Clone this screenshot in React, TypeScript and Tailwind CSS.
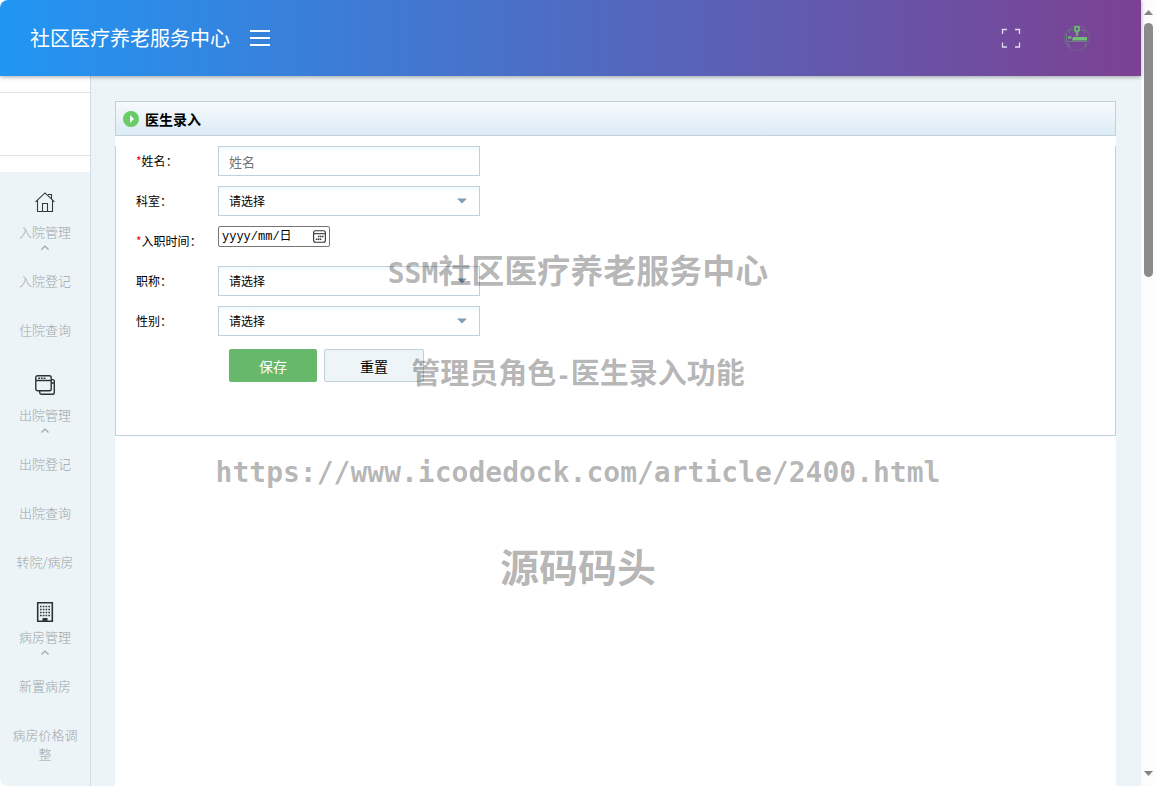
import type { ReactNode } from "react"

const HomeIcon = () => (
  <svg width="20" height="20" viewBox="0 0 20 20" fill="none" stroke="#333a3f" strokeWidth="1.1">
    <path d="M.5 9.8 10 .9l9.5 8.9M2.5 8.2v11.3h15V8.2M7.5 19.5v-8h5v8M13 2.5h3.5v4.3" />
  </svg>
)

const WindowsIcon = () => (
  <svg width="20" height="20" viewBox="0 0 20 20" fill="none" stroke="#2c3236" strokeWidth="1.4">
    <rect x=".8" y=".8" width="15.4" height="15" rx="1.8" />
    <path d="M1 5.5h15M16.2 4.6h1.4a1.7 1.7 0 0 1 1.7 1.7v11.2a1.8 1.8 0 0 1-1.8 1.8H6.4a1.7 1.7 0 0 1-1.7-1.7v-1.6M16 8h3" />
    <path d="M3.2 3.2h7.2" strokeWidth="1.6" strokeDasharray="1.8 .9" />
  </svg>
)

const BuildingIcon = () => (
  <svg width="20" height="20" viewBox="0 0 20 20" fill="none" stroke="#2c3236">
    <path d="M2.7.7h14.6v18.6H2.7z" strokeWidth="1.6" />
    <path d="M5 4.5h10M5 7.5h10M5 10.5h10M5 13.5h10" strokeWidth="1.6" strokeDasharray="1.6 1.2" />
    <path d="M7.5 16h5v3.5h-5z" fill="#2c3236" stroke="none" />
  </svg>
)

const FullscreenIcon = () => (
  <svg width="20" height="20" viewBox="0 0 20 20" fill="none" stroke="#e3daf0" strokeWidth="1.3">
    <path d="M1.5 6V1.5H6M14 1.5h4.5V6M18.5 14.5V19H14M6 19H1.5v-4.5" />
  </svg>
)

const AvatarIcon = () => (
  <svg width="26" height="26" viewBox="0 0 26 26" fill="none">
    <circle cx="13" cy="13" r="12.4" stroke="#75618c" />
    <path d="M5 7.5V5h4M17 5h3.5v2.5M2.5 9v8M2.500 16.500h21M3.500 18l2 4M22.500 18l-2 4" stroke="#6c7f80" />
    <path d="M10 1h6v5l-1.800 1.500V11h-2.400V7.500L10 6Z" fill="#68ae6e" />
    <path d="M12 3h2v2h-2z" fill="#75479a" />
    <path d="M4 11.500h3.500v2H4zM9 12h14v3.500H8z" fill="#73bd75" />
  </svg>
)

const groups: { title: string; icon: ReactNode; compact?: boolean; items: string[] }[] = [
  { title: "入院管理", icon: <HomeIcon />, items: ["入院登记", "住院查询"] },
  { title: "出院管理", icon: <WindowsIcon />, items: ["出院登记", "出院查询", "转院/病房"] },
  { title: "病房管理", icon: <BuildingIcon />, compact: true, items: ["新置病房", "病房价格调整"] },
]

function Sidebar() {
  return (
    <aside className="w-[91px] shrink-0 overflow-hidden border-r border-[#d0dce1] bg-white">
      <div className="mt-4 h-16 border-y border-[#dfe3e5]" />
      <nav className="mt-4 bg-[#ecf4f8] pb-10 text-center text-[13px] leading-[19px] font-light text-[#a0a5a7]">
        {groups.map((g) => (
          <div key={g.title} className="mb-px">
            <a href="#" className={g.compact ? "block pt-[15px]" : "block pt-5"}>
              <span className="flex justify-center">{g.icon}</span>
              <span className={g.compact ? "mt-[5px] block" : "mt-[10px] block"}>{g.title}</span>
              <span className="flex h-[15px] justify-center pt-1">
                <svg width="8" height="5" viewBox="0 0 8 5" fill="none" stroke="#9fa5a8" strokeWidth="1.2">
                  <path d="M.5 4.5 4 1l3.5 3.5" />
                </svg>
              </span>
            </a>
            {g.items.map((item) => (
              <a key={item} href="#" className="block px-3 py-[15px]">
                {item}
              </a>
            ))}
          </div>
        ))}
      </nav>
    </aside>
  )
}

function Row({ id, label, required, children }: { id: string; label: string; required?: boolean; children: ReactNode }) {
  return (
    <div className="flex h-[30px]">
      <label htmlFor={id} className="w-[82px] shrink-0 text-xs leading-[30px]">
        {required && <span className="text-red-600">*</span>}
        {label}：
      </label>
      {children}
    </div>
  )
}

function SelectBox({ id }: { id: string }) {
  return (
    <div className="relative w-[262px]">
      <select
        id={id}
        className="h-[30px] w-full appearance-none border border-[#c0d1db] bg-linear-to-b from-[#f2f8fc] to-white to-20% px-[10px] text-xs"
      >
        <option>请选择</option>
      </select>
      <svg className="pointer-events-none absolute top-3 right-[13px]" width="10" height="6" viewBox="0 0 10 6">
        <path d="M0 .5h10L5 5.5Z" fill="#809db5" />
      </svg>
    </div>
  )
}

function DoctorForm() {
  return (
    <form className="mt-[10px] flex h-[290px] flex-col gap-[10px] border-x border-b border-[#c0d1db] pl-5">
      <Row id="name" label="姓名" required>
        <input
          id="name"
          placeholder="姓名"
          className="h-[30px] w-[262px] border border-[#c0d1db] bg-linear-to-b from-[#f2f8fc] to-white to-20% px-[10px] text-[13px] placeholder:text-[#757575]"
        />
      </Row>
      <Row id="dept" label="科室">
        <SelectBox id="dept" />
      </Row>
      <Row id="entry" label="入职时间" required>
        <div className="flex h-[21px] w-[112px] items-center rounded-xs border border-[#767676] bg-white px-[3px]">
          <input
            id="entry"
            defaultValue="yyyy/mm/日"
            className="w-full min-w-0 font-['Liberation_Mono','Noto_Sans_CJK_SC',monospace] text-xs"
          />
          <button type="button" aria-label="选择日期" className="shrink-0">
            <svg width="13" height="13" viewBox="0 0 13 13" fill="none" stroke="#333">
              <rect x=".6" y=".8" width="11.8" height="11.4" rx="2" strokeWidth="1.1" />
              <path d="M1 3.7h11" strokeWidth="1.1" />
              <path d="M5 6.5h5.5M2.8 9.2h5.5" strokeWidth="1.5" strokeDasharray="1.5 .5" />
            </svg>
          </button>
        </div>
      </Row>
      <Row id="title" label="职称">
        <SelectBox id="title" />
      </Row>
      <Row id="gender" label="性别">
        <SelectBox id="gender" />
      </Row>
      <div className="mt-[3px] ml-[93px] flex gap-[7px] text-sm">
        <button type="submit" className="h-[33px] w-[88px] rounded-xs bg-[#67b86b] text-white">
          保存
        </button>
        <button type="reset" className="h-[33px] w-[100px] rounded-xs border border-[#c0d1db] bg-[#edf5f9]">
          重置
        </button>
      </div>
    </form>
  )
}

function Watermark() {
  return (
    <div className="pointer-events-none absolute inset-0 flex flex-col items-center pt-[249px] font-bold leading-10 whitespace-nowrap text-black/30">
      <p className="text-[33px]">
        <span className="font-['DejaVu_Sans_Mono',monospace] text-[28px] leading-none">SSM</span>社区医疗养老服务中心
      </p>
      <p className="mt-[62px] text-[29px]">
        管理员角色<span className="font-['DejaVu_Sans_Mono',monospace] text-[24px] leading-none">-</span>医生录入功能
      </p>
      <p className="mt-[62px] font-['DejaVu_Sans_Mono',monospace] text-[28px]">
        https://www.icodedock.com/article/2400.html
      </p>
      <p className="mt-[52px] text-[39px]">源码码头</p>
    </div>
  )
}

function Scrollbar() {
  return (
    <div className="flex w-[15px] shrink-0 flex-col items-center bg-[#fcfcfc] pt-[10px] pb-[10px]">
      <svg width="9" height="5" viewBox="0 0 9 5">
        <path d="M4.5 0 9 5H0Z" fill="#858585" />
      </svg>
      <div className="mt-2 h-[254px] w-[9px] rounded-full bg-[#8b8b8b]" />
      <svg className="mt-auto" width="9" height="5" viewBox="0 0 9 5">
        <path d="M0 0h9L4.5 5Z" fill="#858585" />
      </svg>
    </div>
  )
}

export default function App() {
  return (
    <div className="relative flex h-screen overflow-hidden rounded-lg bg-white font-['Noto_Sans_CJK_SC',sans-serif] text-black">
      <div className="flex min-w-0 flex-1 flex-col">
        <header className="z-10 flex h-[76px] shrink-0 items-center bg-linear-to-r/srgb from-[#2196f3] to-[#7c4192] pr-[51px] pl-[30px] text-white shadow-[0_1px_4px_rgba(0,0,0,0.35)]">
          <h1 className="text-xl">社区医疗养老服务中心</h1>
          <button aria-label="菜单" className="ml-5 flex w-5 flex-col gap-[5px]">
            <span className="h-[2px] bg-white" />
            <span className="h-[2px] bg-white" />
            <span className="h-[2px] bg-white" />
          </button>
          <button aria-label="全屏" className="ml-auto">
            <FullscreenIcon />
          </button>
          <a href="#" aria-label="用户" className="ml-[43px]">
            <AvatarIcon />
          </a>
        </header>
        <div className="flex min-h-0 flex-1">
          <Sidebar />
          <main className="flex flex-1 bg-[#ecf4f8] pt-[25px] pr-[25px] pl-6">
            <section className="flex-1 bg-white">
              <div className="flex h-[35px] items-center gap-[6px] border border-[#c0d1db] bg-linear-to-b from-[#f6fafd] to-[#dcebf5] pl-[7px]">
                <svg width="16" height="16" viewBox="0 0 16 16">
                  <circle cx="8" cy="8" r="8" fill="#66cc66" />
                  <path d="M7 4 11 8 7 12Z" fill="#fff" />
                </svg>
                <h2 className="text-sm font-bold">医生录入</h2>
              </div>
              <DoctorForm />
            </section>
          </main>
        </div>
      </div>
      <Scrollbar />
      <Watermark />
    </div>
  )
}
